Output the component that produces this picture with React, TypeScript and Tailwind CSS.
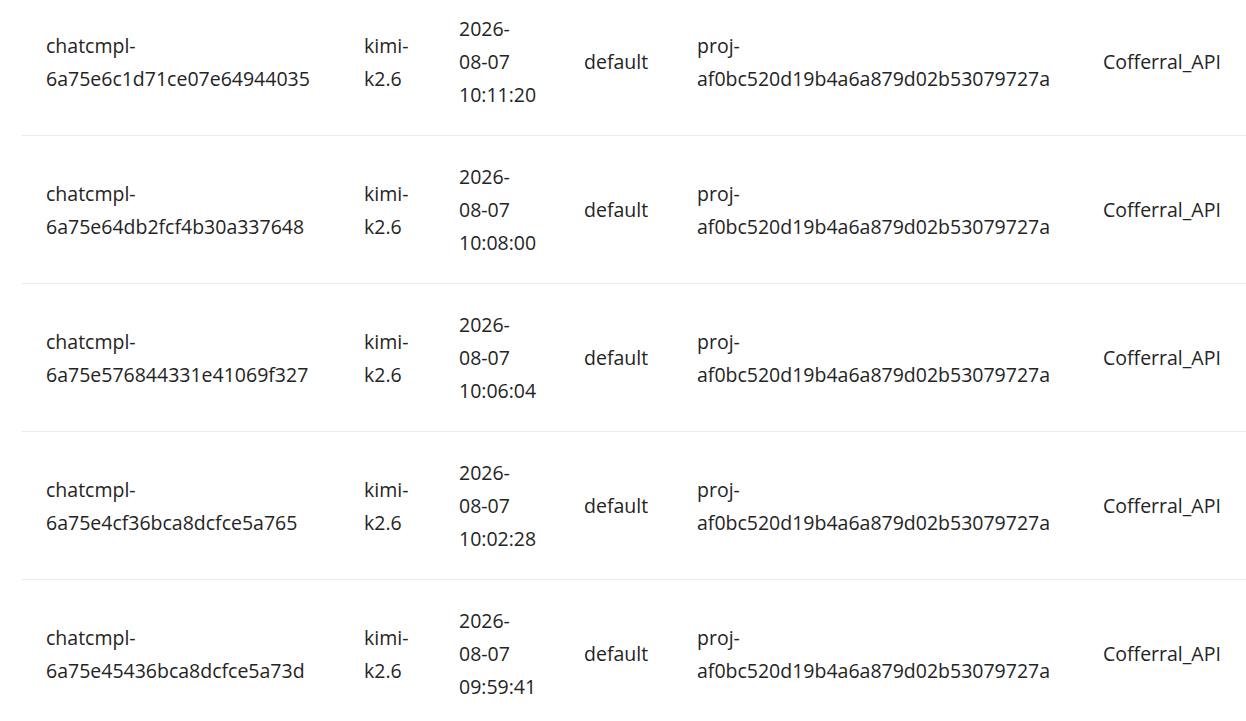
import React from 'react';

type Row = { id: string, model: string, created: string, project: string, proj: string, owner: string };

const rows: Row[] = [
  { id: '6a75e6c1d71ce07e64944035', model: 'k2.6', created: '2026-08-07 10:11:20', project: 'default', proj: 'af0bc520d19b4a6a879d02b53079727a', owner: 'Cofferral_API' },
  { id: '6a75e64db2fcf4b30a337648', model: 'k2.6', created: '2026-08-07 10:08:00', project: 'default', proj: 'af0bc520d19b4a6a879d02b53079727a', owner: 'Cofferral_API' },
  { id: '6a75e576844331e41069f327', model: 'k2.6', created: '2026-08-07 10:06:04', project: 'default', proj: 'af0bc520d19b4a6a879d02b53079727a', owner: 'Cofferral_API' },
  { id: '6a75e4cf36bca8dcfce5a765', model: 'k2.6', created: '2026-08-07 10:02:28', project: 'default', proj: 'af0bc520d19b4a6a879d02b53079727a', owner: 'Cofferral_API' },
  { id: '6a75e45436bca8dcfce5a73d', model: 'k2.6', created: '2026-08-07 09:59:41', project: 'default', proj: 'af0bc520d19b4a6a879d02b53079727a', owner: 'Cofferral_API' },
];

export default function App() {
  return (
    <main className="h-[721px] overflow-hidden bg-white pl-[22px] text-[#242424] font-['Open_Sans',sans-serif] text-[19.5px] leading-[33px]">
      <table className="-mt-[12px] w-[1224px] table-fixed border-collapse">
        <colgroup>
          <col className="w-[318px]" />
          <col className="w-[95px]" />
          <col className="w-[125px]" />
          <col className="w-[113px]" />
          <col className="w-[406px]" />
          <col className="w-[167px]" />
        </colgroup>
        <tbody>
          {rows.map(r => {
            const [d, t] = r.created.split(' ');
            return (
              <tr key={r.id} className="border-b border-[#ebebeb]">
                <td className="px-6 py-6 align-middle">
                  <span className="block">chatcmpl-</span>
                  <span className="block">{r.id}</span>
                </td>
                <td className="px-6 py-6 align-middle">
                  <span className="block">kimi-</span>
                  <span className="block">{r.model}</span>
                </td>
                <td className="px-6 py-6 align-middle whitespace-nowrap">
                  <span className="block">{d.slice(0, 5)}</span>
                  <span className="block">{d.slice(5)}</span>
                  <span className="block">{t}</span>
                </td>
                <td className="px-6 py-6 align-middle">{r.project}</td>
                <td className="px-6 py-6 align-middle">
                  <span className="block">proj-</span>
                  <span className="block">{r.proj}</span>
                </td>
                <td className="px-6 py-6 align-middle whitespace-nowrap">{r.owner}</td>
              </tr>
            );
          })}
        </tbody>
      </table>
    </main>
  );
}
